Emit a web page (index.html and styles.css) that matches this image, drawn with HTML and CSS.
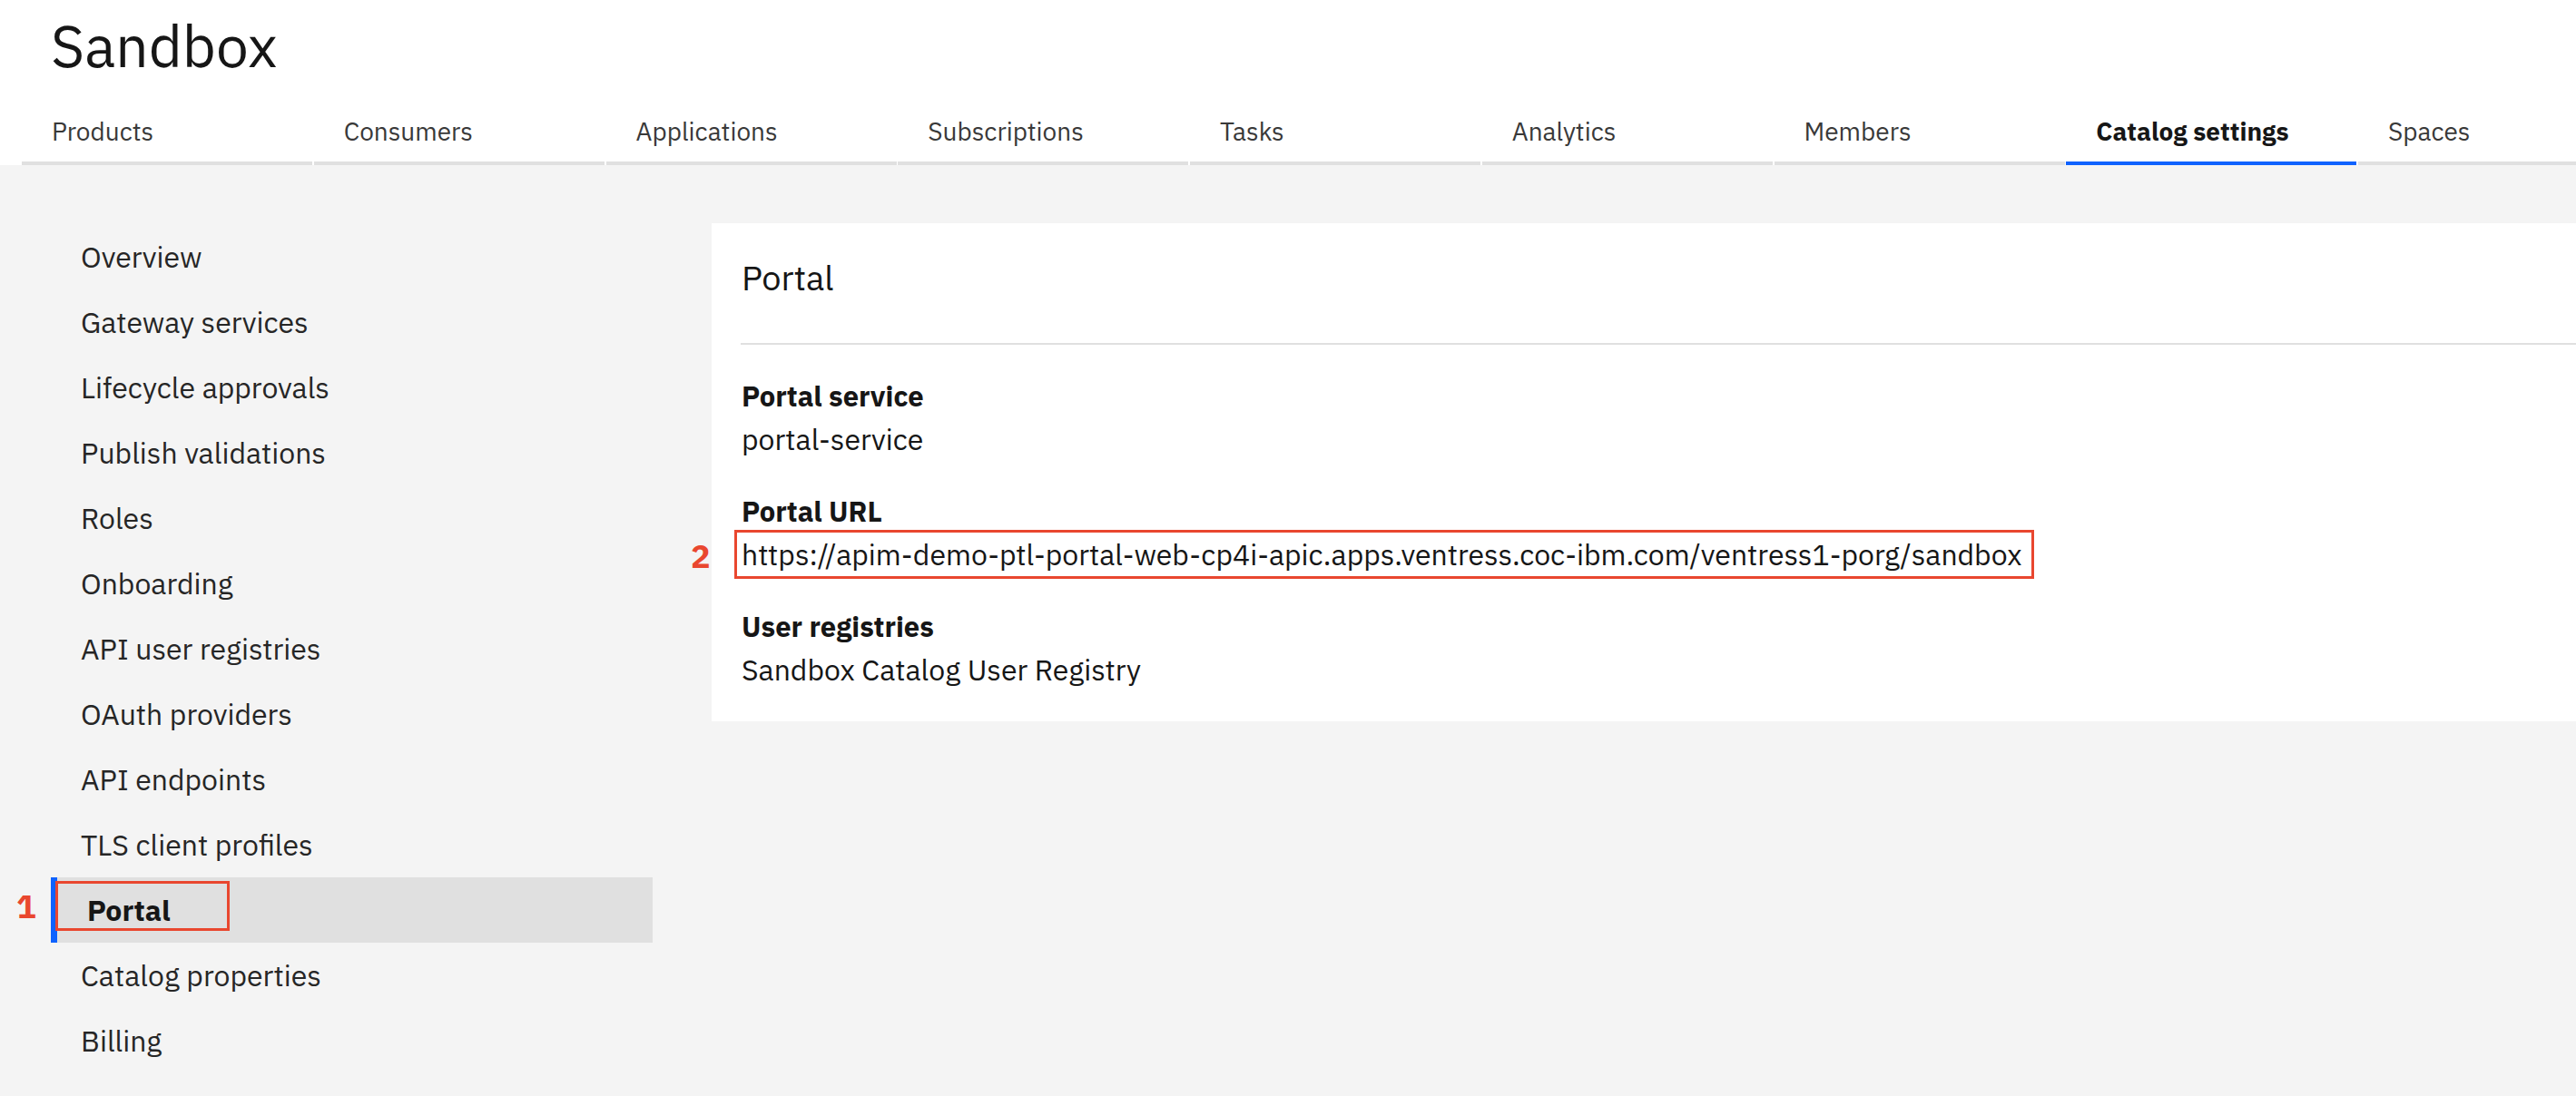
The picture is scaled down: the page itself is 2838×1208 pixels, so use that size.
FILE: index.html
```html
<!DOCTYPE html>
<html lang="en">
<head>
<meta charset="utf-8">
<title>Sandbox - Catalog settings</title>
<link rel="stylesheet" href="styles.css">
</head>
<body>
<header class="header">
  <h1 class="title">Sandbox</h1>
  <nav class="tabs">
    <a class="tab">Products</a>
    <a class="tab">Consumers</a>
    <a class="tab">Applications</a>
    <a class="tab">Subscriptions</a>
    <a class="tab">Tasks</a>
    <a class="tab">Analytics</a>
    <a class="tab">Members</a>
    <a class="tab tab-active">Catalog settings</a>
    <a class="tab">Spaces</a>
  </nav>
</header>
<main class="content">
  <aside class="sidenav">
    <ul class="nav-list">
      <li class="nav-item">Overview</li>
      <li class="nav-item">Gateway services</li>
      <li class="nav-item">Lifecycle approvals</li>
      <li class="nav-item">Publish validations</li>
      <li class="nav-item">Roles</li>
      <li class="nav-item">Onboarding</li>
      <li class="nav-item">API user registries</li>
      <li class="nav-item">OAuth providers</li>
      <li class="nav-item">API endpoints</li>
      <li class="nav-item">TLS client profiles</li>
      <li class="nav-item nav-active"><span class="annot-num annot-num-1">1</span><span class="annot-box"></span>Portal</li>
      <li class="nav-item">Catalog properties</li>
      <li class="nav-item">Billing</li>
    </ul>
  </aside>
  <section class="card">
    <h2 class="card-title">Portal</h2>
    <div class="divider"></div>
    <div class="field">
      <div class="field-label">Portal service</div>
      <div class="field-value">portal-service</div>
    </div>
    <div class="field">
      <div class="field-label">Portal URL</div>
      <div class="field-value field-url"><span class="annot-num annot-num-2">2</span><span class="url-box">https://apim-demo-ptl-portal-web-cp4i-apic.apps.ventress.coc-ibm.com/ventress1-porg/sandbox</span></div>
    </div>
    <div class="field field-last">
      <div class="field-label">User registries</div>
      <div class="field-value">Sandbox Catalog User Registry</div>
    </div>
  </section>
</main>
</body>
</html>
```

FILE: styles.css
```css
* {
  box-sizing: border-box;
}

html, body {
  margin: 0;
  padding: 0;
}

body {
  background: #f4f4f4;
  font-family: "IBM Plex Sans", "Liberation Sans", Arial, sans-serif;
  color: #161616;
  overflow: hidden;
  min-height: 100vh;
}

.header {
  background: #ffffff;
}

.title {
  margin: 0;
  padding: 12px 0 0 56px;
  font-size: 64px;
  line-height: 76px;
  font-weight: 400;
  color: #161616;
}

.tabs {
  display: flex;
  gap: 1.75px;
  padding: 37px 0 0 24px;
  overflow: hidden;
  white-space: nowrap;
}

.tab {
  flex: 0 0 320px;
  padding: 0 0 13px 33px;
  font-size: 28px;
  line-height: 40px;
  color: #393939;
  border-bottom: 4px solid #e0e0e0;
}

.tab-active {
  font-weight: 700;
  color: #161616;
  border-bottom-color: #0f62fe;
}

.content {
  display: flex;
  align-items: flex-start;
  gap: 65px;
  padding: 64px 0 0 56px;
}

.sidenav {
  flex: 0 0 663px;
  padding-top: 1px;
}

.nav-list {
  list-style: none;
  margin: 0;
  padding: 0;
}

.nav-item {
  position: relative;
  height: 72px;
  padding-left: 33px;
  font-size: 32px;
  line-height: 72px;
  color: #262626;
}

.nav-active {
  border-left: 7px solid #0f62fe;
  background: #e0e0e0;
  font-weight: 700;
  color: #161616;
}

.annot-box {
  position: absolute;
  left: -2px;
  top: 4px;
  width: 192px;
  height: 55px;
  border: 3px solid #e9472f;
}

.annot-num {
  position: absolute;
  font-size: 36px;
  line-height: 36px;
  font-weight: 700;
  color: #e9472f;
}

.annot-num-1 {
  left: -45px;
  top: 14px;
}

.annot-num-2 {
  left: -56px;
  top: 11px;
}

.card {
  flex: 1 1 auto;
  background: #ffffff;
  padding: 36px 0 30px 33px;
}

.card-title {
  margin: 0;
  font-size: 38px;
  line-height: 48px;
  font-weight: 400;
  color: #161616;
}

.divider {
  height: 2px;
  margin: 48px 0 37px -1px;
  background: #e0e0e0;
}

.field {
  margin-bottom: 33px;
}

.field-last {
  margin-bottom: 0;
}

.field-label {
  font-size: 31px;
  line-height: 40px;
  font-weight: 700;
  color: #161616;
}

.field-value {
  font-size: 32px;
  line-height: 54px;
  color: #161616;
}

.field-url {
  position: relative;
  display: flex;
}

.url-box {
  display: inline-block;
  margin-left: -8px;
  padding: 0 11px 0 5px;
  line-height: 48px;
  border: 3px solid #e9472f;
  white-space: nowrap;
}
```
